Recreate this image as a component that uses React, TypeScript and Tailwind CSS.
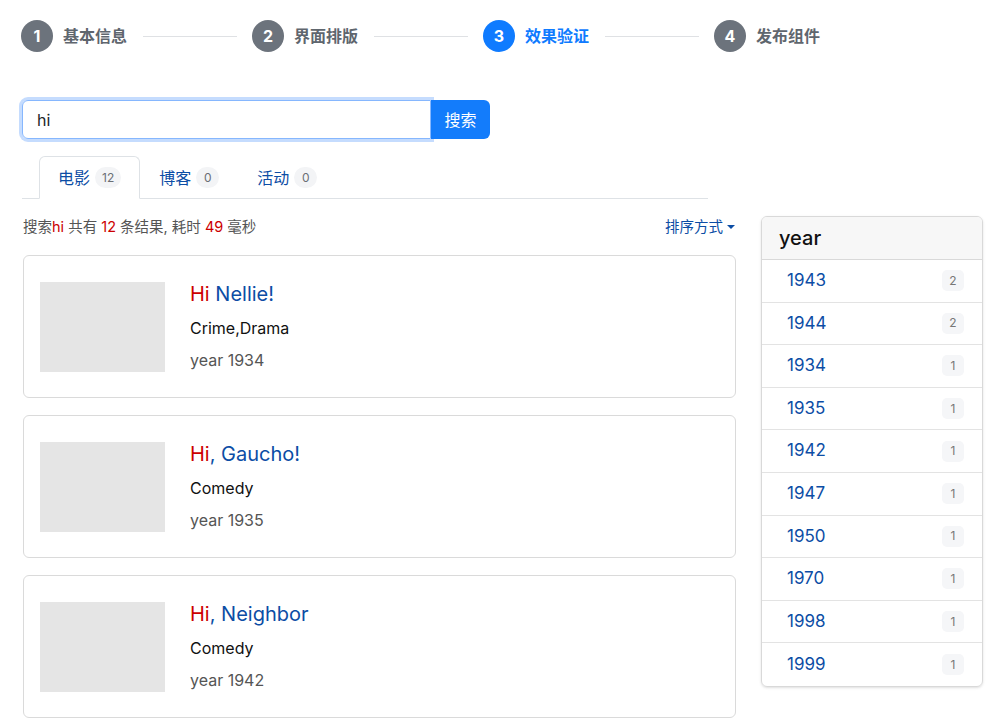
import React from 'react'

const steps = [
  { n: 1, label: '基本信息', active: false },
  { n: 2, label: '界面排版', active: false },
  { n: 3, label: '效果验证', active: true },
  { n: 4, label: '发布组件', active: false },
]

const tabs = [
  { text: '电影', count: 12, active: true },
  { text: '博客', count: 0, active: false },
  { text: '活动', count: 0, active: false },
]

const movies = [
  { hl: 'Hi', rest: ' Nellie!', genre: 'Crime,Drama', year: 1934 },
  { hl: 'Hi', rest: ', Gaucho!', genre: 'Comedy', year: 1935 },
  { hl: 'Hi', rest: ', Neighbor', genre: 'Comedy', year: 1942 },
]

const years = [
  { y: 1943, c: 2 },
  { y: 1944, c: 2 },
  { y: 1934, c: 1 },
  { y: 1935, c: 1 },
  { y: 1942, c: 1 },
  { y: 1947, c: 1 },
  { y: 1950, c: 1 },
  { y: 1970, c: 1 },
  { y: 1998, c: 1 },
  { y: 1999, c: 1 },
]

const font = { fontFamily: 'Inter, "Noto Sans CJK SC", sans-serif' }

const App = () => {
  return (
    <div className="w-[1000px] h-[727px] overflow-hidden bg-white pl-[22px] pt-[20px]" style={font}>
      {/* Steps */}
      <div className="flex items-center h-8 -ml-px">
        {steps.map((s, i) => (
          <React.Fragment key={s.n}>
            <div className="flex items-center">
              <div className={`w-8 h-8 rounded-full flex items-center justify-center text-white text-[16px] font-bold ${s.active ? 'bg-[#0f7bff]' : 'bg-[#6c737c]'}`}>
                {s.n}
              </div>
              <span className={`ml-[10px] w-[65px] text-[16px] font-semibold ${s.active ? 'text-[#0f7bff]' : 'text-[#5f666e]'}`}>{s.label}</span>
            </div>
            {i < steps.length - 1 && <div className="w-[94px] h-px bg-[#dfe1e4] mx-[15px]" />}
          </React.Fragment>
        ))}
      </div>

      {/* Search */}
      <div className="flex mt-[48px] w-[468px]">
        <div className="flex-1 h-[39px] border border-[#86b7fe] rounded-l-[6px] ring-[3px] ring-[#c5dcfe] flex items-center px-[14px] text-[16px] text-[#212529]">
          hi
        </div>
        <button className="w-[59px] h-[39px] bg-[#137cfb] text-white text-[16px] rounded-r-[6px]">搜索</button>
      </div>

      {/* Tabs */}
      <div className="mt-[17px] w-[686px] flex border-b border-[#dee2e6] pl-[17px]">
        {tabs.map((t) => (
          <div
            key={t.text}
            className={`h-[43px] px-[18px] flex items-center -mb-px ${t.active ? 'border border-[#dee2e6] border-b-white rounded-t-[6px] bg-white' : 'border border-transparent'}`}
          >
            <span className="text-[16px] text-[#0c4da5]">{t.text}</span>
            <span className="ml-[5px] h-[21px] min-w-[23px] px-[7px] rounded-full bg-[#f3f4f6] text-[12px] text-[#6b6f75] flex items-center justify-center">
              {t.count}
            </span>
          </div>
        ))}
      </div>

      {/* Body */}
      <div className="flex mt-[17px]">
        <div className="w-[714px] pl-px">
          <div className="flex items-center justify-between h-[22px] text-[14.5px] text-[#555]">
            <div>
              搜索<span className="text-[#cc0000]">hi</span> 共有 <span className="text-[#cc0000]">12</span> 条结果, 耗时{' '}
              <span className="text-[#cc0000]">49</span> 毫秒
            </div>
            <div className="flex items-center text-[#0c4da5]">
              排序方式
              <svg width="10" height="10" viewBox="0 0 10 10" className="ml-[3px]">
                <path d="M1 3 L9 3 L5 7 Z" fill="currentColor" />
              </svg>
            </div>
          </div>

          <div className="mt-[17px] flex flex-col gap-[17px]">
            {movies.map((m) => (
              <div key={m.rest} className="h-[143px] border border-[#dadada] rounded-[6px] flex items-center px-[16px]">
                <div className="w-[125px] h-[90px] bg-[#e5e5e5]" />
                <div className="ml-[25px] flex flex-col">
                  <div className="text-[20px] leading-6">
                    <span className="text-[#cc0000]">{m.hl}</span>
                    <span className="text-[#0c4da5]">{m.rest}</span>
                  </div>
                  <div className="mt-[11px] text-[16px] leading-[22px] text-[#111]">{m.genre}</div>
                  <div className="mt-[10px] text-[16px] leading-[22px] text-[#555]">year {m.year}</div>
                </div>
              </div>
            ))}
          </div>
        </div>

        {/* Sidebar */}
        <div className="ml-[25px] w-[222px] self-start border border-[#d9d9d9] rounded-[6px] shadow-sm overflow-hidden">
          <div className="h-[43px] bg-[#f7f7f7] border-b border-[#d9d9d9] flex items-center pl-[17px] text-[20px] font-medium text-[#111]">
            year
          </div>
          {years.map((y, i) => (
            <div
              key={y.y}
              className={`h-[42.6px] flex items-center justify-between pl-[25px] pr-[18px] ${i < years.length - 1 ? 'border-b border-[#e3e3e3]' : ''}`}
            >
              <span className="text-[17px] text-[#0c4da5]">{y.y}</span>
              <span className="w-[22px] h-[21px] rounded-[5px] bg-[#f5f6f8] text-[12px] text-[#777] flex items-center justify-center">{y.c}</span>
            </div>
          ))}
        </div>
      </div>
    </div>
  )
}

export default App
